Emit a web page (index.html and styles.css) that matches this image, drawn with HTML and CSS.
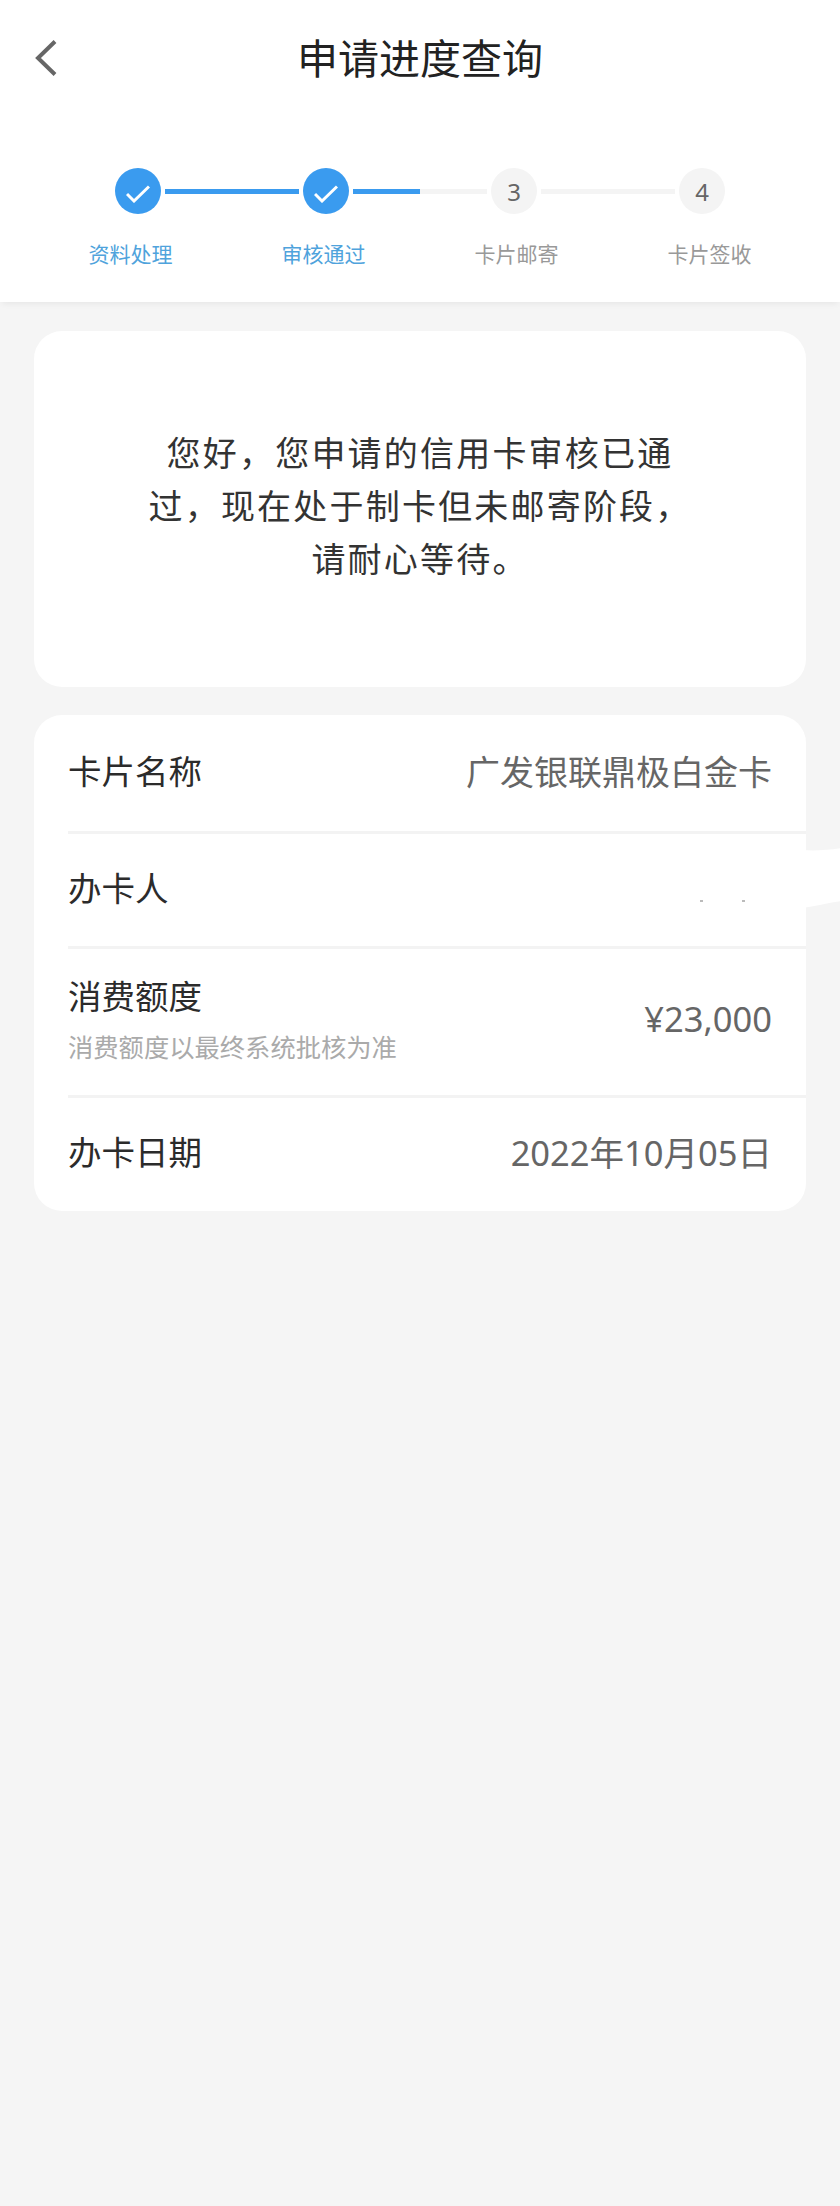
FILE: index.html

```html
<!DOCTYPE html>
<html lang="zh-CN">
<head>
  <meta charset="UTF-8">
  <title>申请进度查询</title>
  <meta name="viewport" content="width=device-width, initial-scale=1.0">
  <link rel="stylesheet" href="styles.css">
</head>
<body>

<header class="topbar">
  <a class="back" href="#">
    <svg width="24" height="38" viewBox="0 0 24 38"><path d="M21 2.500 4 19l17 16.500" fill="none" stroke="#666" stroke-width="4"/></svg>
  </a>
  <h1>申请进度查询</h1>
</header>

<section class="steps">
  <div class="track">
    <span class="dot done"><svg class="tick" width="24" height="18" viewBox="0 0 24 18"><path d="M1 9l7 7L23 1.500" fill="none" stroke="#fff" stroke-width="3"/></svg></span>
    <span class="line full"></span>
    <span class="dot done"><svg class="tick" width="24" height="18" viewBox="0 0 24 18"><path d="M1 9l7 7L23 1.500" fill="none" stroke="#fff" stroke-width="3"/></svg></span>
    <span class="line half"></span>
    <span class="dot">3</span>
    <span class="line"></span>
    <span class="dot">4</span>
  </div>
  <div class="labels">
    <span class="on">资料处理</span>
    <span class="on">审核通过</span>
    <span>卡片邮寄</span>
    <span>卡片签收</span>
  </div>
</section>

<section class="card notice">
  <p>您好，您申请的信用卡审核已通<br>过，现在处于制卡但未邮寄阶段，<br>请耐心等待。</p>
</section>

<section class="card info">
  <div class="row row-first">
    <span class="name">卡片名称</span>
    <span class="value value-cn">广发银联鼎极白金卡</span>
  </div>
  <div class="row row-holder">
    <span class="name">办卡人</span>
  </div>
  <div class="row row-limit">
    <div>
      <div class="name">消费额度</div>
      <div class="hint">消费额度以最终系统批核为准</div>
    </div>
    <span class="value">¥23,000</span>
  </div>
  <div class="row row-date">
    <span class="name">办卡日期</span>
    <span class="value">2022年10月05日</span>
  </div>
  <!-- white patch over the holder's name -->
  <svg class="patch" width="40" height="64" viewBox="0 0 40 64"><path d="M0 2C14 3 26 2 40 0V53C26 55 14 58 0 60Z" fill="#fff"/></svg>
  <i class="speck speck-a"></i>
  <i class="speck speck-b"></i>
</section>

</body>
</html>
```

FILE: styles.css

```css
* { box-sizing: border-box; }
body { margin: 0; min-height: 2206px; background: #f5f5f5; color: #2b2b2b; font-family: "Noto Sans", "Noto Sans CJK SC", sans-serif; }

.topbar { height: 112px; background: #fff; padding: 4px 0 0 34px; display: grid; grid-template-columns: 50px 1fr 84px; align-items: center; }
.topbar h1 { margin: 0; padding-bottom: 5px; font-size: 41px; font-weight: 400; line-height: 56px; text-align: center; color: #222; font-family: "Noto Sans CJK SC", sans-serif; }
.back { display: block; height: 38px; }

.steps { background: #fff; height: 190px; padding-top: 56px; box-shadow: 0 4px 6px -2px rgba(0,0,0,.06); }
.track { display: flex; align-items: center; gap: 4px; margin: 0 115px; }
.dot { width: 46px; height: 46px; border-radius: 50%; background: #f4f4f4; color: #666; font-size: 24px; display: flex; align-items: center; justify-content: center; flex: none; }
.dot.done { background: #3a9bef; }
.tick { margin-top: 5px; }
.line { flex: 1; height: 5px; background: #f4f4f4; }
.line.full { background: #3a9bef; }
.line.half { background: linear-gradient(to right, #3a9bef 50%, #f4f4f4 50%); }
.labels { display: grid; grid-template-columns: repeat(4, 193px); margin: 24px 0 0 34px; font-size: 21px; line-height: 30px; text-align: center; color: #999; font-family: "Noto Sans CJK SC", sans-serif; }
.labels .on { color: #4fa3dc; }

.card { background: #fff; border-radius: 28px; margin: 0 34px; }
.notice { height: 356px; margin-top: 29px; padding-bottom: 10px; display: flex; align-items: center; justify-content: center; }
.notice p { margin: 0; font-size: 34px; letter-spacing: 2.200px; line-height: 53px; text-align: center; color: #333; font-family: "Noto Sans CJK SC", sans-serif; }

.info { margin-top: 28px; height: 496px; position: relative; font-family: "Noto Sans CJK SC", sans-serif; }
.row { margin-left: 34px; padding: 0 34px 6px 0; display: flex; align-items: center; justify-content: space-between; border-top: 3px solid #f3f3f3; }
.row-first { height: 116px; border-top: 0; }
.row-holder { height: 115px; }
.row-limit { height: 149px; padding-bottom: 8px; }
.row-date { height: 116px; padding-bottom: 8px; }
.name { font-size: 33.500px; line-height: 46px; color: #2b2b2b; }
.value { font-size: 34.500px; color: #666; font-family: "Noto Sans", "Noto Sans CJK SC", sans-serif; }
.value-cn { font-size: 34px; }
.hint { font-size: 25.300px; line-height: 36px; margin-top: 10px; color: #aaa; }

.patch { position: absolute; left: 768px; top: 133px; }
.speck { position: absolute; top: 185px; width: 3px; height: 2px; background: #bbb; }
.speck-a { left: 666px; }
.speck-b { left: 708px; }
```
